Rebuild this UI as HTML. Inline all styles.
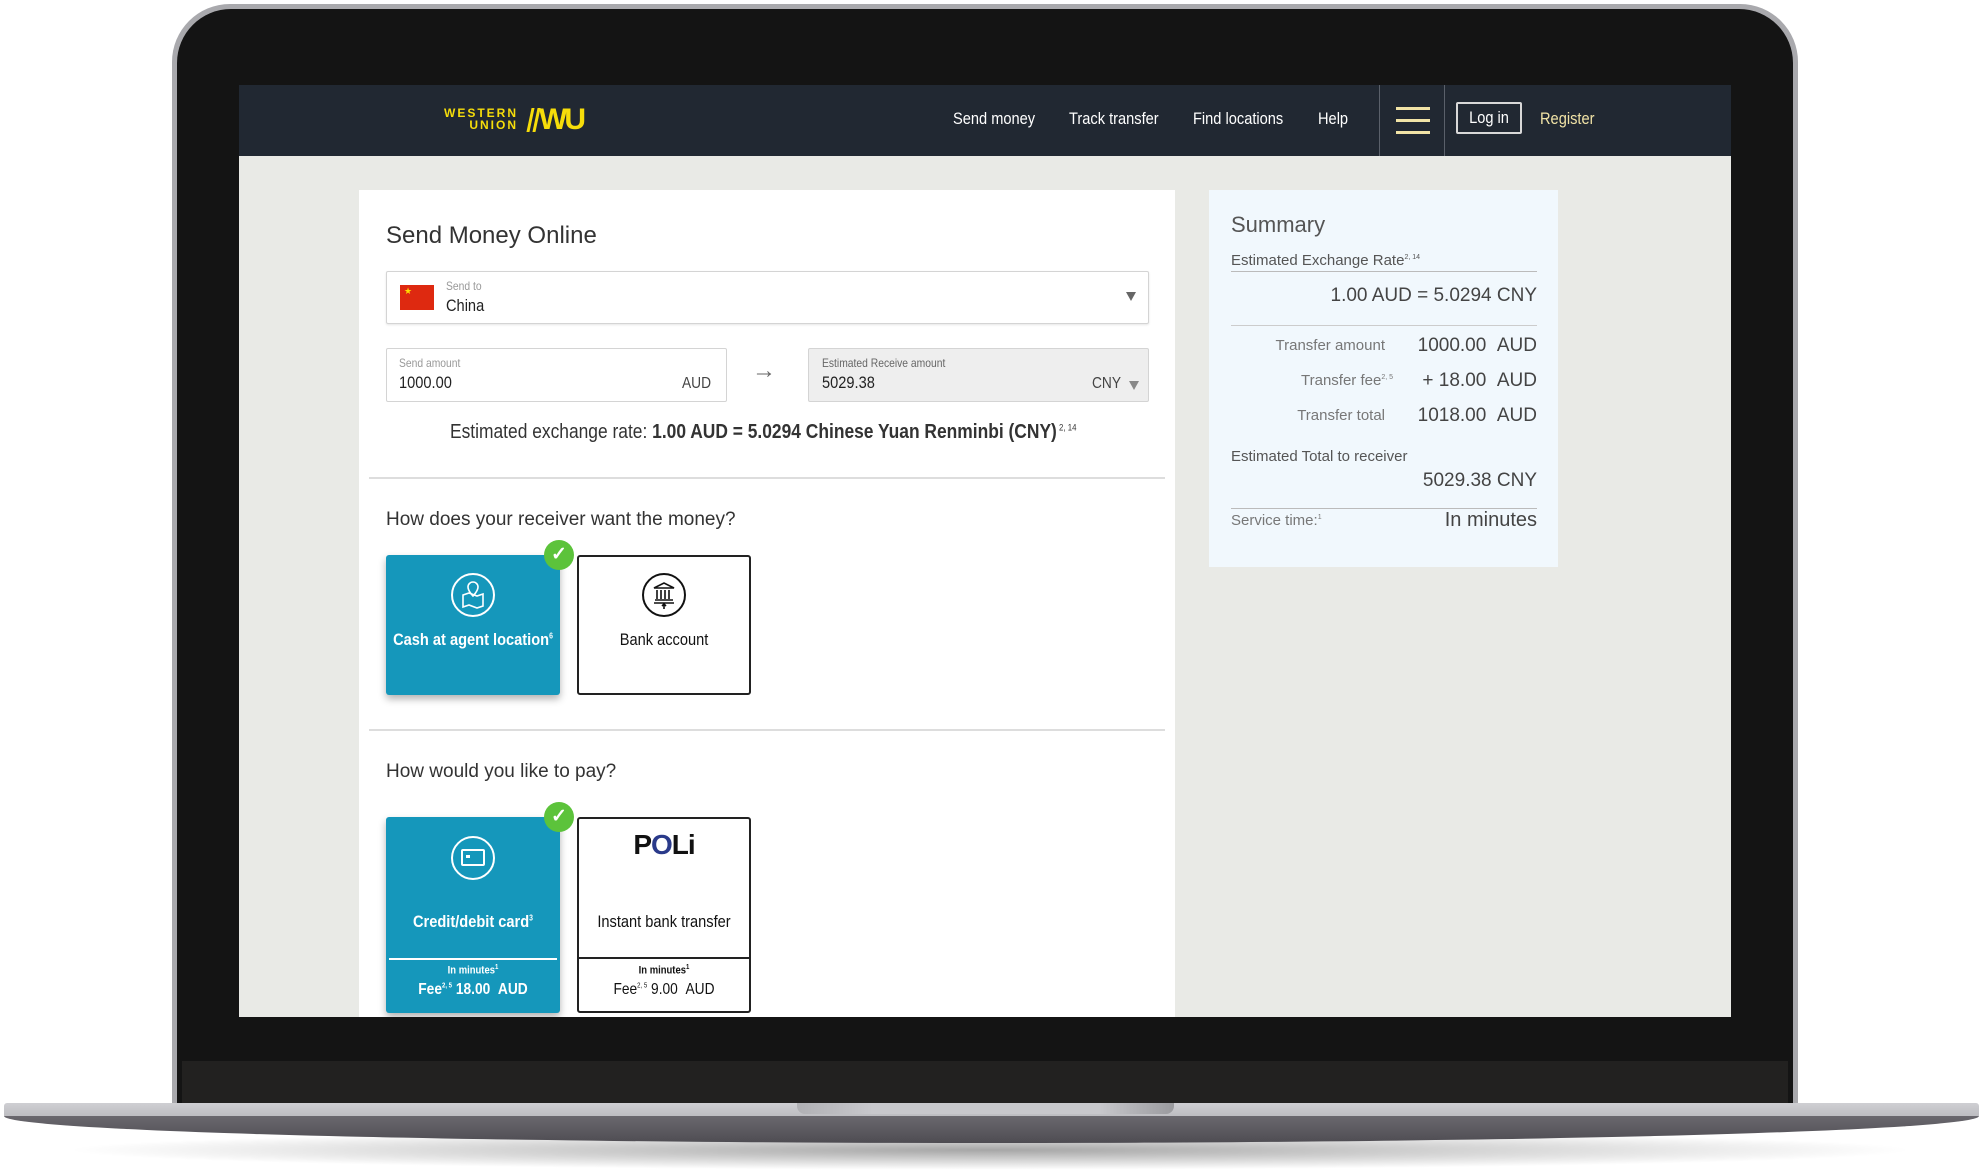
<!DOCTYPE html>
<html><head><meta charset="utf-8"><style>
*{margin:0;padding:0;box-sizing:border-box}
body{width:1983px;height:1174px;background:#fff;position:relative;overflow:hidden;font-family:"Liberation Sans",sans-serif}
.a{position:absolute;white-space:nowrap}
.n{font-family:"Liberation Sans",sans-serif;transform:scaleX(.86);transform-origin:left center}
.nc{font-family:"Liberation Sans",sans-serif;transform:scaleX(.86);transform-origin:center center}
.s{font-family:"Liberation Sans",sans-serif}
</style></head><body>
<div class="a" style="left:60px;top:1130px;width:1860px;height:40px;border-radius:50%;background:radial-gradient(ellipse at center,rgba(0,0,0,.35),rgba(0,0,0,0) 70%)"></div>
<div class="a" style="left:172px;top:4px;width:1626px;height:1110px;border-radius:58px 58px 0 0;background:#a9a9ad"></div>
<div class="a" style="left:177px;top:9px;width:1616px;height:1105px;border-radius:54px 54px 0 0;background:#141414"></div>
<div class="a" style="left:182px;top:1061px;width:1606px;height:42px;background:#222120"></div>
<div class="a" style="left:4px;top:1103px;width:1975px;height:13px;background:linear-gradient(#cfcfd3,#bdbdc1);border-radius:3px 3px 0 0"></div>
<div class="a" style="left:797px;top:1103px;width:377px;height:11px;background:linear-gradient(90deg,#b0b0b4,#c8c8cc 20%,#c8c8cc 80%,#9a9a9e);border-radius:0 0 8px 8px"></div>
<div class="a" style="left:4px;top:1116px;width:1975px;height:27px;background:linear-gradient(#6a686e,#4e4c52);border-radius:0 0 50% 50%/0 0 100% 100%"></div>
<div class="a" style="left:239px;top:85px;width:1492px;height:932px;background:#e9eae6;overflow:hidden">
 <div class="a" style="left:0;top:0;width:1492px;height:71px;background:#212832"></div>
 <div class="a s" style="left:205px;top:22px;color:#f6dd0a;font-weight:900;font-size:12px;letter-spacing:2px;line-height:12px;text-align:right">WESTERN<br>&nbsp;&nbsp;UNION</div>
 <div class="a" style="left:290px;top:23px;width:3px;height:24px;background:#f6dd0a;transform:skewX(-12deg)"></div>
 <div class="a" style="left:296px;top:23px;width:3px;height:24px;background:#f6dd0a;transform:skewX(-12deg)"></div>
 <div class="a s" style="left:300px;top:19px;color:#f6dd0a;font-weight:900;font-size:30px;letter-spacing:-3px;line-height:32px">WU</div>
 <div class="a n" style="left:714px;top:24px;color:#fff;font-size:17px">Send money</div>
 <div class="a n" style="left:830px;top:24px;color:#fff;font-size:17px">Track transfer</div>
 <div class="a n" style="left:954px;top:24px;color:#fff;font-size:17px">Find locations</div>
 <div class="a n" style="left:1079px;top:24px;color:#fff;font-size:17px">Help</div>
 <div class="a" style="left:1140px;top:0;width:1px;height:71px;background:#5a606a"></div>
 <div class="a" style="left:1205px;top:0;width:1px;height:71px;background:#5a606a"></div>
 <div class="a" style="left:1157px;top:22px;width:34px;height:3px;background:#f1e3a6;box-shadow:0 12px 0 #f1e3a6,0 24px 0 #f1e3a6"></div>
 <div class="a" style="left:1217px;top:17px;width:66px;height:32px;border:2px solid #d8d8d8;border-radius:2px"></div>
 <div class="a nc" style="left:1217px;top:23px;width:66px;color:#fff;font-size:17px;text-align:center">Log in</div>
 <div class="a n" style="left:1301px;top:24px;color:#f1e3a6;font-size:17px">Register</div>

 <div class="a" style="left:120px;top:105px;width:816px;height:850px;background:#fff"></div>
 <div class="a s" style="left:147px;top:137px;color:#333;font-size:24px">Send Money Online</div>
 <div class="a" style="left:147px;top:186px;width:763px;height:53px;border:1px solid #d4d4d4;border-radius:2px;box-shadow:0 1px 2px rgba(0,0,0,.1)"></div>
 <div class="a" style="left:161px;top:200px;width:34px;height:25px;background:#de2910"><span style="position:absolute;left:4px;top:1px;color:#ffde00;font-size:9px">★</span></div>
 <div class="a n" style="left:207px;top:194px;color:#999;font-size:12px">Send to</div>
 <div class="a n" style="left:207px;top:211px;color:#222;font-size:17px">China</div>
 <div class="a" style="left:887px;top:207px;width:0;height:0;border-left:5px solid transparent;border-right:5px solid transparent;border-top:9px solid #666"></div>

 <div class="a" style="left:147px;top:263px;width:341px;height:54px;border:1px solid #d4d4d4;border-radius:2px"></div>
 <div class="a n" style="left:160px;top:271px;color:#999;font-size:12px">Send amount</div>
 <div class="a n" style="left:160px;top:288px;color:#222;font-size:17px">1000.00</div>
 <div class="a n" style="left:443px;top:290px;color:#444;font-size:16px">AUD</div>
 <div class="a s" style="left:513px;top:272px;color:#666;font-size:24px">→</div>
 <div class="a" style="left:569px;top:263px;width:341px;height:54px;border:1px solid #d4d4d4;border-radius:2px;background:#eeeeee"></div>
 <div class="a n" style="left:583px;top:271px;color:#666;font-size:12px">Estimated Receive amount</div>
 <div class="a n" style="left:583px;top:288px;color:#222;font-size:17px">5029.38</div>
 <div class="a n" style="left:853px;top:290px;color:#444;font-size:16px">CNY</div>
 <div class="a" style="left:890px;top:296px;width:0;height:0;border-left:5px solid transparent;border-right:5px solid transparent;border-top:9px solid #888"></div>
 <div class="a n" style="left:211px;top:336px;color:#333;font-size:20px;transform:scaleX(.87)">Estimated exchange rate: <b>1.00 AUD = 5.0294 Chinese Yuan Renminbi (CNY)</b><sup style="font-size:9px"> 2, 14</sup></div>
 <div class="a" style="left:130px;top:392px;width:796px;height:2px;background:#ddd"></div>
 <div class="a s" style="left:147px;top:424px;color:#333;font-size:19px">How does your receiver want the money?</div>
 <div class="a" style="left:147px;top:470px;width:174px;height:140px;background:#1597bb;border-radius:3px;box-shadow:0 4px 8px rgba(0,0,0,.3)"></div>
 <div class="a" style="left:212px;top:488px;width:44px;height:44px;border:2px solid #fff;border-radius:50%"></div>
 <svg class="a" style="left:220px;top:495px" width="28" height="30" viewBox="0 0 28 30" fill="none" stroke="#fff" stroke-width="1.6"><path d="M14 2a5 5 0 0 1 5 5c0 4-5 9-5 9s-5-5-5-9a5 5 0 0 1 5-5z"/><path d="M4 15l6-2 8 3 6-2v12l-6 2-8-3-6 2z"/></svg>
 <div class="a nc" style="left:137px;top:545px;width:194px;text-align:center;color:#fff;font-size:17px;font-weight:bold">Cash at agent location<sup style="font-size:8px">6</sup></div>
 <div class="a" style="left:305px;top:455px;width:30px;height:30px;border-radius:50%;background:#5cc33b;color:#fff;text-align:center;line-height:30px;font-size:19px;font-weight:bold">✓</div>
 <div class="a" style="left:338px;top:470px;width:174px;height:140px;border:2px solid #222;border-radius:3px"></div>
 <div class="a" style="left:403px;top:488px;width:44px;height:44px;border:2px solid #111;border-radius:50%"></div>
 <svg class="a" style="left:411px;top:495px" width="28" height="30" viewBox="0 0 28 30" fill="none" stroke="#111" stroke-width="1.6"><path d="M4 8l10-5 10 5z M7 10v9 M11 10v9 M15 10v9 M19 10v9 M5 20h18 M4 23h20 M14 29v-5 M12 26l2-2 2 2"/></svg>
 <div class="a nc" style="left:338px;top:545px;width:174px;text-align:center;color:#111;font-size:17px">Bank account</div>
 <div class="a" style="left:130px;top:644px;width:796px;height:2px;background:#ddd"></div>
 <div class="a s" style="left:147px;top:676px;color:#333;font-size:19px">How would you like to pay?</div>
 <div class="a" style="left:147px;top:732px;width:174px;height:196px;background:#1597bb;border-radius:3px;box-shadow:0 4px 8px rgba(0,0,0,.3)"></div>
 <div class="a" style="left:212px;top:751px;width:44px;height:44px;border:2px solid #fff;border-radius:50%"></div>
 <div class="a" style="left:222px;top:764px;width:24px;height:17px;border:2px solid #fff;border-radius:2px"></div>
 <div class="a" style="left:227px;top:770px;width:4px;height:3px;background:#fff"></div>
 <div class="a nc" style="left:147px;top:827px;width:174px;text-align:center;color:#fff;font-size:17px;font-weight:bold">Credit/debit card<sup style="font-size:8px">3</sup></div>
 <div class="a" style="left:150px;top:873px;width:168px;height:2px;background:#fff"></div>
 <div class="a nc" style="left:147px;top:879px;width:174px;text-align:center;color:#fff;font-size:11px;font-weight:bold">In minutes<sup style="font-size:7px">1</sup></div>
 <div class="a nc" style="left:147px;top:896px;width:174px;text-align:center;color:#fff;font-size:16px;font-weight:bold">Fee<sup style="font-size:7px">2, 5</sup> 18.00 &nbsp;AUD</div>
 <div class="a" style="left:305px;top:717px;width:30px;height:30px;border-radius:50%;background:#5cc33b;color:#fff;text-align:center;line-height:30px;font-size:19px;font-weight:bold">✓</div>
 <div class="a" style="left:338px;top:732px;width:174px;height:196px;border:2px solid #222;border-radius:3px"></div>
 <div class="a" style="left:340px;top:872px;width:170px;height:2px;background:#222"></div>
 <div class="a s" style="left:338px;top:744px;width:174px;text-align:center;color:#111;font-size:28px;font-weight:900;letter-spacing:-1px">P<span style="color:#2a3a8a">O</span>Li</div>
 <div class="a nc" style="left:338px;top:827px;width:174px;text-align:center;color:#111;font-size:17px">Instant bank transfer</div>
 <div class="a nc" style="left:338px;top:879px;width:174px;text-align:center;color:#111;font-size:11px;font-weight:bold">In minutes<sup style="font-size:7px">1</sup></div>
 <div class="a nc" style="left:338px;top:896px;width:174px;text-align:center;color:#111;font-size:16px">Fee<sup style="font-size:7px">2, 5</sup> 9.00 &nbsp;AUD</div>

 <div class="a" style="left:970px;top:105px;width:349px;height:377px;background:#f1f8fd"></div>
 <div class="a s" style="left:992px;top:127px;color:#555;font-size:22px">Summary</div>
 <div class="a s" style="left:992px;top:167px;color:#555;font-size:15px">Estimated Exchange Rate<sup style="font-size:7px">2, 14</sup></div>
 <div class="a" style="left:992px;top:186px;width:306px;height:1px;background:#bbb"></div>
 <div class="a s" style="left:992px;top:200px;width:306px;text-align:right;color:#444;font-size:19px">1.00 AUD = 5.0294 CNY</div>
 <div class="a" style="left:992px;top:240px;width:306px;height:1px;background:#ccc"></div>
 <div class="a s" style="left:992px;top:252px;width:154px;text-align:right;color:#777;font-size:15px">Transfer amount</div>
 <div class="a s" style="left:1160px;top:250px;width:138px;text-align:right;color:#444;font-size:19px">1000.00 &nbsp;AUD</div>
 <div class="a s" style="left:992px;top:287px;width:162px;text-align:right;color:#777;font-size:15px">Transfer fee<sup style="font-size:7px">2, 5</sup></div>
 <div class="a s" style="left:1160px;top:285px;width:138px;text-align:right;color:#444;font-size:19px">+ 18.00 &nbsp;AUD</div>
 <div class="a s" style="left:992px;top:322px;width:154px;text-align:right;color:#777;font-size:15px">Transfer total</div>
 <div class="a s" style="left:1160px;top:320px;width:138px;text-align:right;color:#444;font-size:19px">1018.00 &nbsp;AUD</div>
 <div class="a s" style="left:992px;top:363px;color:#555;font-size:15px">Estimated Total to receiver</div>
 <div class="a s" style="left:992px;top:385px;width:306px;text-align:right;color:#444;font-size:19px">5029.38 CNY</div>
 <div class="a" style="left:992px;top:423px;width:306px;height:1px;background:#bbb"></div>
 <div class="a s" style="left:992px;top:427px;color:#777;font-size:15px">Service time:<sup style="font-size:7px">1</sup></div>
 <div class="a s" style="left:1160px;top:424px;width:138px;text-align:right;color:#444;font-size:20px">In minutes</div>
</div>
</body></html>
